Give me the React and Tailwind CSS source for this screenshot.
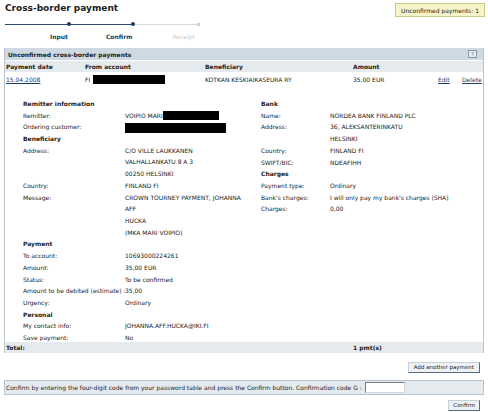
import React from "react";

const font = { fontFamily: '"DejaVu Sans", Verdana, sans-serif' };

const Redact = ({ w, h = "h-[9px]" }) => (
  <span className={`inline-block align-middle bg-black ${w} ${h}`} />
);

const Row = ({ label, children, bold, labelW }) =>
  bold ? (
    <div className="h-[11.7px] leading-[11.7px] font-bold">{label}</div>
  ) : (
    <div className="flex leading-[11.7px]">
      <div className={`${labelW} shrink-0 whitespace-nowrap`}>{label}</div>
      <div className="whitespace-nowrap">{children}</div>
    </div>
  );

export default function App() {
  const L = "w-[102px]";
  const R = "w-[69px]";
  return (
    <div className="w-[488px] h-[412px] bg-white text-[#222] text-[6px] relative" style={font}>
      {/* top */}
      <div className="flex justify-between pl-[5px] pr-[3px] pt-[3px]">
        <h1 className="text-[9px] font-bold leading-[11px] text-[#1c1c1c]">Cross-border payment</h1>
        <div className="h-[14px] px-[5px] flex items-center border border-[#c9c98a] bg-[#f5f5c9] text-[6px]">
          Unconfirmed payments: 1
        </div>
      </div>

      {/* stepper */}
      <div className="relative ml-[5px] mt-[5px] w-[196px] h-[4px]">
        <div className="absolute left-0 top-[1.5px] w-[128px] h-[1px] bg-[#2b4a6f]" />
        <div className="absolute left-[128px] top-[1.5px] w-[65px] h-[1px] bg-[#d9d9d9]" />
        <div className="absolute left-[61.5px] top-0 w-[4px] h-[4px] rounded-full bg-[#1f3d63]" />
        <div className="absolute left-[126px] top-0 w-[4px] h-[4px] rounded-full bg-[#1f3d63]" />
        <div className="absolute left-[191.5px] top-[0.5px] w-[3px] h-[3px] bg-[#cfcfcf]" />
      </div>
      <div className="flex h-[10px] mt-[6px] font-bold leading-[10px] text-[6px]">
        <span className="ml-[50px] text-[#213a5c]">Input</span>
        <span className="ml-[38px] text-[#213a5c]">Confirm</span>
        <span className="ml-[40px] text-[#c8c8c8] font-normal">Receipt</span>
      </div>

      {/* panel */}
      <div className="mx-[4px] mt-[6px] border-x border-[#b7c4d0]">
        <div className="h-[12px] bg-[#cfd9e2] flex items-center justify-between pl-[3px] pr-[6px] font-bold">
          <span>Unconfirmed cross-border payments</span>
          <span className="w-[9px] h-[8px] border border-[#8a98a6] bg-[#e4eaf0] text-[5px] leading-[6px] text-center font-normal text-[#556]">?</span>
        </div>
        <div className="h-[12px] bg-[#e5eaef] flex items-center font-bold border-t border-white">
          <span className="w-[80px] pl-[1px]">Payment date</span>
          <span className="w-[120px]">From account</span>
          <span className="w-[148px]">Beneficiary</span>
          <span>Amount</span>
        </div>
        <div className="h-[12px] flex items-center mt-[1px]">
          <span className="w-[80px] pl-[1px] underline text-[#1b3b6b]">15.04.2008</span>
          <span className="w-[120px] flex items-center">
            FI<span className="ml-[3px]" /><Redact w="w-[72px]" />
          </span>
          <span className="w-[148px]">KOTKAN KESKIAIKASEURA RY</span>
          <span className="w-[85px]">35,00 EUR</span>
          <span className="underline text-[#1b3b6b] w-[24px]">Edit</span>
          <span className="underline text-[#1b3b6b]">Delete</span>
        </div>

        {/* details */}
        <div className="flex pt-[13px]">
          <div className="w-[256px] pl-[18px]">
            <Row bold label="Remitter information" />
            <Row labelW={L} label="Remitter:">
              <span className="flex items-center">VOIPIO MARI<Redact w="w-[56px]" /></span>
            </Row>
            <Row labelW={L} label="Ordering customer:">
              <Redact w="w-[101px]" h="h-[10px]" />
            </Row>
            <Row bold label="Beneficiary" />
            <Row labelW={L} label="Address:">
              <div>C/O VILLE LAUKKANEN</div>
              <div>VALHALLANKATU 8 A 3</div>
              <div>00250 HELSINKI</div>
            </Row>
            <Row labelW={L} label="Country:">FINLAND FI</Row>
            <Row labelW={L} label="Message:">
              <div>CROWN TOURNEY PAYMENT, JOHANNA</div>
              <div>AFF</div>
              <div>HUCKA</div>
              <div>(MKA MARI VOIPIO)</div>
            </Row>
            <Row bold label="Payment" />
            <Row labelW={L} label="To account:">10693000224261</Row>
            <Row labelW={L} label="Amount:">35,00 EUR</Row>
            <Row labelW={L} label="Status:">To be confirmed</Row>
            <Row labelW={L} label="Amount to be debited (estimate) :">35,00</Row>
            <Row labelW={L} label="Urgency:">Ordinary</Row>
            <Row bold label="Personal" />
            <Row labelW={L} label="My contact info:">JOHANNA.AFF.HUCKA@IKI.FI</Row>
            <Row labelW={L} label="Save payment:">No</Row>
          </div>
          <div>
            <Row bold label="Bank" />
            <Row labelW={R} label="Name:">NORDEA BANK FINLAND PLC</Row>
            <Row labelW={R} label="Address:">
              <div>36, ALEKSANTERINKATU</div>
              <div>HELSINKI</div>
            </Row>
            <Row labelW={R} label="Country:">FINLAND FI</Row>
            <Row labelW={R} label="SWIFT/BIC:">NDEAFIHH</Row>
            <Row bold label="Charges" />
            <Row labelW={R} label="Payment type:">Ordinary</Row>
            <Row labelW={R} label="Bank's charges:">I will only pay my bank's charges (SHA)</Row>
            <Row labelW={R} label="Charges:">0,00</Row>
          </div>
        </div>

        <div className="h-[11px] -mt-[2px] bg-[#e5eaef] flex items-center font-bold relative">
          <span className="w-[348px] pl-[1px]">Total:</span>
          <span>1 pmt(s)</span>
        </div>
      </div>

      <div className="flex justify-end pr-[8px] mt-[9px]">
        <button className="h-[11px] px-[5px] text-[5.5px] leading-[9px] bg-[#eef1f4] border border-t-[#c9d0d8] border-l-[#c9d0d8] border-b-[#5e6a78] border-r-[#5e6a78]">
          Add another payment
        </button>
      </div>

      <div className="mx-[4px] mt-[7px] h-[15px] bg-[#e5eaef] border border-[#b7c4d0] flex items-center pl-[1px]">
        <span>Confirm by entering the four-digit code from your password table and press the Confirm button. Confirmation code G :</span>
        <input className="ml-[3px] w-[40px] h-[11px] bg-white border border-t-[#7a7a7a] border-l-[#7a7a7a] border-b-[#d8d8d8] border-r-[#d8d8d8]" />
      </div>

      <div className="flex justify-end pr-[8px] mt-[5px]">
        <button className="h-[11px] px-[4px] text-[5.5px] leading-[9px] bg-[#eef1f4] border border-t-[#c9d0d8] border-l-[#c9d0d8] border-b-[#5e6a78] border-r-[#5e6a78]">
          Confirm
        </button>
      </div>
    </div>
  );
}
